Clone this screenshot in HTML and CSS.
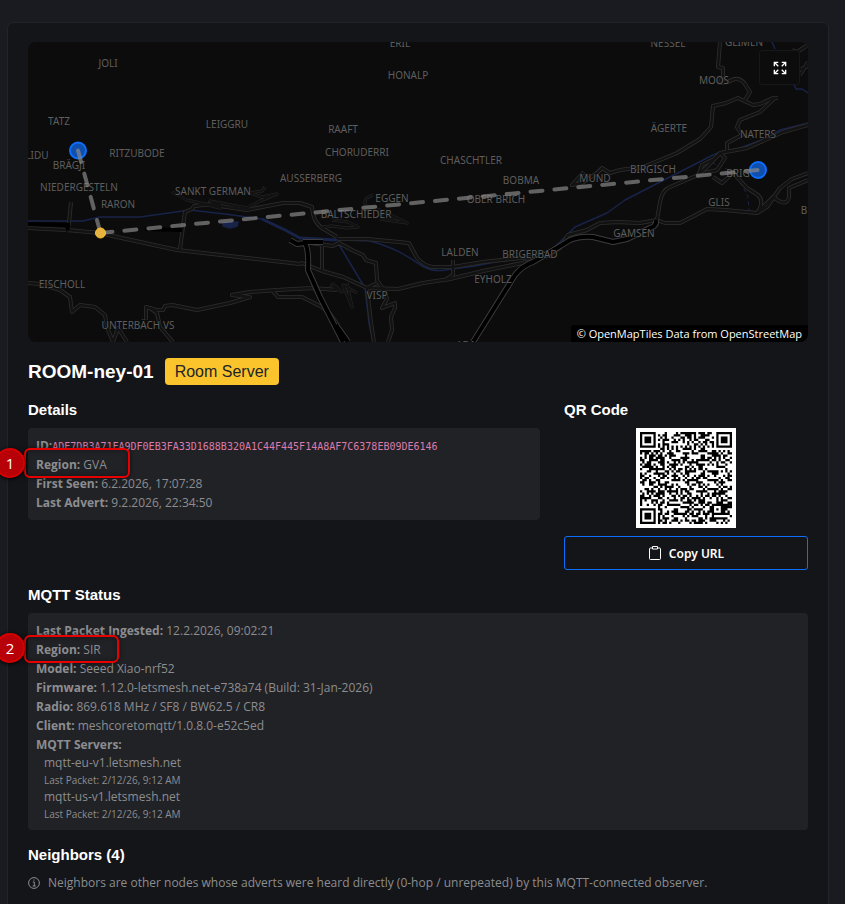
FILE: index.html
```html
<!doctype html>
<html lang="en">
  <head>
    <meta charset="utf-8">
    <meta name="viewport" content="width=device-width, initial-scale=1">
    <title>ROOM-ney-01</title>
    <link rel="stylesheet" href="styles.css">
  </head>
  <body>
    <main class="card">
      <div class="map">
        <svg class="map-canvas" viewBox="28 42 780 300" preserveAspectRatio="xMidYMid slice">
          <defs>
            <g id="roads">
              <path d="M28 228L67 230L100 233L117 237L177 250L300 264L302 263L322 271L343 277L367 288L398 289L423 283L450 279L483 271L537 260"/>
              <path d="M338 239L367 239L409 243L417 258Q424 266 433 267L453 267L483 262L530 257L547 254L557 247"/>
              <path d="M180 249L185 212L192 209L194 206L213 204L220 206L247 210L267 206L283 203L300 203L312 207Q313 222 322 228L337 237"/>
              <path d="M322 242L322 270"/>
              <path d="M303 242L333 246L339 243L352 250L363 255L366 260L376 263L377 280L385 292L387 299L382 308L395 303L395 308L391 317L392 330L388 342"/>
              <path d="M367 288L371 323L374 342M367 288L377 283"/>
              <path d="M28 283L40 284L60 290L70 297L72 312L80 305L95 307L105 315L107 327L113 342L118 328L127 342"/>
              <path d="M146 320L146 307L156 310L163 310L165 306L172 305L197 310L230 303L250 297L232 295L250 292L277 290L313 288L337 290"/>
              <path d="M150 308L157 313L160 327L173 342"/>
              <path d="M272 290L278 297L302 297L322 307L330 314L338 325"/>
              <path d="M453 260L453 275L445 280"/>
              <path d="M71 202L69 223L67 232"/>
              <path d="M720 42L718 67L723 68L723 75L720 83L728 82Q738 75 745 84L750 92L745 100"/>
              <path d="M778 98L773 98L760 104L753 105L738 98L726 103L713 106L711 127L700 139L677 153L643 167L620 170L610 173L602 168L597 173L582 183L572 185L584 172"/>
              <path d="M775 98L760 112L740 120L737 127L742 135L727 143L727 152"/>
              <path d="M808 125L783 132L747 148L720 153L707 167L698 175L670 187Q662 190 660 202L657 220"/>
              <path d="M699 174L702 165L714 159L721 153M705 173L717 170L725 158L721 154"/>
              <path d="M713 177L722 183L733 173L747 188L758 195Q765 202 757 213"/>
              <path d="M545 257L560 248L568 235L587 230L600 223L617 222L640 223L657 220L665 223L680 223L690 218L707 209L725 210L757 213L767 207L780 188L792 179L808 173"/>
              <path d="M757 213L773 197Q787 208 789 197L789 188L808 180"/>
              <path d="M792 50L797 52L808 45M800 75L808 62M801 69L808 66"/>
            </g>
            <g id="lanes">
              <path d="M172 192L187 200L200 203L220 208L220 205L210 201L247 208L260 201L277 194L262 197L250 193L262 191L265 187"/>
              <path d="M323 227L332 226L347 228L358 227L348 222L332 220M373 195Q362 199 366 206L380 210"/>
              <path d="M380 219L407 223L387 213L377 215M330 285L342 292L332 283M347 283L352 307L343 285L357 293"/>
            </g>
            <g id="motorways">
              <path d="M473 342L515 275Q522 266 533 262L557 248L570 240Q580 236 593 237L613 242L627 239L650 228Q657 226 656 220"/>
              <path d="M290 240L297 244L305 243Q309 250 308 270L320 297L343 342M303 242L323 242M336 325L348 342"/>
            </g>
          </defs>

          <g class="water">
            <path d="M28 221L83 221L100 217L140 217L190 210L225 214L262 219L285 230L300 238L337 240L370 241C400 249 412 260 424 267Q434 272 445 270L475 266L500 261L540 257L551 250L560 242L575 227L607 213L625 200L660 182L713 155L720 152L740 148L767 138L780 130L808 123"/>
            <path class="river" d="M262 219L285 230L300 238L337 240"/>
            <path d="M338 243L350 263L365 288L369 323L373 342"/>
            <path d="M772 42L775 49M794 85L796 89L802 89L808 93"/>
            <path class="stream" d="M712 163L723 167L733 173L743 187L748 197L749 211"/>
            <path class="lake" d="M223 223L238 222L237 226L230 228L223 226Z"/>
          </g>

          <use href="#roads" class="road-casing"/>
          <use href="#lanes" class="lane-casing"/>
          <use href="#roads" class="road"/>
          <use href="#lanes" class="lane"/>
          <use href="#motorways" class="motorway-casing"/>
          <use href="#motorways" class="motorway"/>
          <path class="tunnel" d="M28 224L70 225M145 229L182 230M67 225L68 230"/>

          <g class="places">
            <text x="400" y="47">ERIL</text>
            <text x="668" y="47">NESSEL</text>
            <text x="744" y="46">GLIMEN</text>
            <text x="108" y="67">JOLI</text>
            <text x="408" y="79">HONALP</text>
            <text x="714" y="84">MOOS</text>
            <text x="59" y="125">TATZ</text>
            <text x="227" y="128">LEIGGRU</text>
            <text x="343" y="133">RAAFT</text>
            <text x="669" y="132">ÄGERTE</text>
            <text x="758" y="138">NATERS</text>
            <text x="37" y="159">LIDU</text>
            <text x="69" y="169">BRÄGJI</text>
            <text x="137" y="157">RITZUBODE</text>
            <text x="357" y="156">CHORUDERRI</text>
            <text x="471" y="164">CHASCHTLER</text>
            <text x="311" y="182">AUSSERBERG</text>
            <text x="521" y="184">BOBMA</text>
            <text x="595" y="182">MUND</text>
            <text x="653" y="173">BIRGISCH</text>
            <text x="738" y="177">BRIG</text>
            <text x="79" y="191">NIEDERGESTELN</text>
            <text x="213" y="195">SANKT GERMAN</text>
            <text x="118" y="208">RARON</text>
            <text x="392" y="202">EGGEN</text>
            <text x="496" y="203">OBER BRICH</text>
            <text x="719" y="206">GLIS</text>
            <text x="804" y="214">B</text>
            <text x="356" y="218">BALTSCHIEDER</text>
            <text x="634" y="237">GAMSEN</text>
            <text x="460" y="256">LALDEN</text>
            <text x="530" y="258">BRIGERBAD</text>
            <text x="493" y="283">EYHOLZ</text>
            <text x="62" y="288">EISCHOLL</text>
            <text x="377" y="299">VISP</text>
            <text x="138" y="329">UNTERBÄCH VS</text>
            <text x="466" y="349">ADA</text>
          </g>

          <circle class="node" cx="78" cy="150.5" r="8"/>
          <circle class="node" cx="758" cy="170" r="8"/>
          <path class="link" d="M78 150.5L100.5 233"/>
          <path class="link" d="M100.5 233L758 170"/>
          <circle class="room" cx="100.5" cy="233" r="5"/>
        </svg>

        <button class="fullscreen" type="button" aria-label="Fullscreen">
          <svg width="14" height="14" viewBox="0 0 16 16">
            <path d="M1.5 6V1.5H6M1.5 1.5L6 6M10 1.5H14.5V6M14.5 1.5L10 6M1.5 10V14.5H6M1.5 14.5L6 10M14.5 10V14.5H10M14.5 14.5L10 10"/>
          </svg>
        </button>
        <div class="attribution">© <a href="#">OpenMapTiles</a> <a href="#">Data from OpenStreetMap</a></div>
      </div>

      <header class="title">
        <h1>ROOM-ney-01</h1>
        <span class="badge">Room Server</span>
      </header>

      <div class="columns">
        <section class="details">
          <h2>Details</h2>
          <div class="panel">
            <p><b>ID:</b><code>ADE7DB3A71FA9DF0EB3FA33D1688B320A1C44F445F14A8AF7C6378EB09DE6146</code></p>
            <p class="marked">
              <b>Region:</b> GVA
              <span class="frame frame-gva"></span>
              <span class="step">1</span>
            </p>
            <p><b>First Seen:</b> 6.2.2026, 17:07:28</p>
            <p><b>Last Advert:</b> 9.2.2026, 22:34:50</p>
          </div>
        </section>

        <section class="share">
          <h2>QR Code</h2>
          <svg id="qr" class="qr" viewBox="0 0 41 41"></svg>
          <button class="copy" type="button">
            <svg width="14" height="14" viewBox="0 0 14 14">
              <path d="M4 2H2.500Q1.500 2 1.500 3V12.500Q1.500 13.500 2.500 13.500H11.500Q12.500 13.500 12.500 12.500V3Q12.500 2 11.500 2H10"/>
              <path d="M4.500 .5H9.500V3H4.500Z"/>
            </svg>
            Copy URL
          </button>
        </section>
      </div>

      <section>
        <h2>MQTT Status</h2>
        <div class="panel">
          <p><b>Last Packet Ingested:</b> 12.2.2026, 09:02:21</p>
          <p class="marked">
            <b>Region:</b> SIR
            <span class="frame frame-sir"></span>
            <span class="step">2</span>
          </p>
          <p><b>Model:</b> Seeed Xiao-nrf52</p>
          <p><b>Firmware:</b> 1.12.0-letsmesh.net-e738a74 (Build: 31-Jan-2026)</p>
          <p><b>Radio:</b> 869.618 MHz / SF8 / BW62.5 / CR8</p>
          <p><b>Client:</b> meshcoretomqtt/1.0.8.0-e52c5ed</p>
          <p><b>MQTT Servers:</b></p>
          <ul class="servers">
            <li>mqtt-eu-v1.letsmesh.net <small>Last Packet: 2/12/26, 9:12 AM</small></li>
            <li>mqtt-us-v1.letsmesh.net <small>Last Packet: 2/12/26, 9:12 AM</small></li>
          </ul>
        </div>
      </section>

      <section>
        <h2>Neighbors (4)</h2>
        <p class="hint">
          <svg width="12" height="12" viewBox="0 0 12 12">
            <circle cx="6" cy="6" r="5.400"/>
            <path d="M4.800 5H6.300V9M4.600 9H7.800M6 2.500V3.700"/>
          </svg>
          Neighbors are other nodes whose adverts were heard directly (0-hop / unrepeated) by this MQTT-connected observer.
        </p>
      </section>
    </main>
    <script src="qr.js"></script>
  </body>
</html>
```

FILE: styles.css
```css
* {
  box-sizing: border-box;
}
body {
  margin: 0;
  padding: 22px 16px 0 7px;
  background: #1a1b20;
  color: #8c8d90;
  font-family: "Open Sans", "Noto Sans", sans-serif;
  font-size: 12px;
  line-height: 19px;
}
h1, h2, p, ul {
  margin: 0;
  padding: 0;
}
h1, h2 {
  color: #fff;
  font-family: "Liberation Sans", Arial, sans-serif;
  font-weight: bold;
}
h1 {
  font-size: 19px;
  line-height: 27px;
}
h2 {
  margin-bottom: 9px;
  font-size: 15px;
  line-height: 18px;
}

.card {
  min-height: calc(100vh - 22px);
  padding: 19px 20px 12px;
  background: #141519;
  border: 1px solid #222328;
  border-bottom: 0;
  border-radius: 6px 6px 0 0;
}

/* map */
.map {
  position: relative;
  height: 300px;
  overflow: hidden;
  background: #0c0c0c;
  border-radius: 8px;
}
.map-canvas {
  display: block;
  width: 100%;
  height: 100%;
}
.map-canvas path,
.map-canvas use {
  fill: none;
  stroke-linejoin: round;
}
.water path {
  stroke: #18234a;
  stroke-width: 1.5;
}
.water .river {
  stroke-width: 3;
}
.water .stream {
  stroke-dasharray: 4 3;
  stroke-width: 1;
}
.water .lake {
  fill: #18234a;
}
.map-canvas defs path {
  stroke: inherit;
}
.road-casing {
  stroke: #2e2e2e;
  stroke-width: 4;
}
.road {
  stroke: #121212;
  stroke-width: 2.4;
}
.lane-casing {
  stroke: #2a2a2a;
  stroke-width: 3;
}
.lane {
  stroke: #111;
  stroke-width: 2;
}
.motorway-casing {
  stroke: #3c3c3c;
  stroke-width: 6;
}
.motorway {
  stroke: #000;
  stroke-width: 4;
}
.tunnel {
  stroke: #000;
  stroke-width: 4;
}
.places text {
  fill: #5e5e5e;
  font-family: "Noto Sans", sans-serif;
  font-size: 10px;
  text-anchor: middle;
  paint-order: stroke;
  stroke: #0c0c0c;
  stroke-width: 1;
}
.map-canvas .link {
  stroke: #888;
  stroke-width: 4;
  stroke-opacity: .7;
  stroke-linecap: round;
  stroke-dasharray: 12 12;
}
.node {
  fill: #0f4fae;
  stroke: #0d6efd;
  stroke-width: 2;
}
.room {
  fill: #e5b341;
  stroke: #fcc32c;
  stroke-width: 1;
}
.fullscreen {
  position: absolute;
  top: 8px;
  right: 8px;
  display: flex;
  align-items: center;
  justify-content: center;
  width: 41px;
  height: 35px;
  padding: 0;
  background: #0c0c0d;
  border: 1px solid #15181b;
  border-radius: 3px;
}
.fullscreen svg {
  fill: none;
  stroke: #fff;
  stroke-width: 1.5;
}
.attribution {
  position: absolute;
  right: 0;
  bottom: 0;
  padding: 0 6px;
  background: #000;
  border-radius: 3px 0 0 0;
  color: #fff;
  font-size: 11px;
  line-height: 17px;
}
.attribution a {
  color: inherit;
  text-decoration: none;
}

/* title */
.title {
  display: flex;
  align-items: center;
  gap: 11px;
  margin: 16px 0;
}
.badge {
  padding: 0 10px;
  background: #fbc42d;
  border-radius: 4px;
  color: #212529;
  font-family: "Liberation Sans", Arial, sans-serif;
  font-size: 16px;
  line-height: 27px;
}

/* details and QR code */
.columns {
  display: grid;
  grid-template-columns: repeat(3, 1fr);
  column-gap: 24px;
  margin-bottom: 16px;
}
.details {
  grid-column: span 2;
}
.panel {
  margin-bottom: 16px;
  padding: 8px;
  background: #212226;
  border-radius: 4px;
}
.panel code {
  color: #dc7bac;
  font-family: "DejaVu Sans Mono", monospace;
  font-size: 10px;
  line-height: 1;
}
.share {
  display: flex;
  flex-direction: column;
}
.qr {
  align-self: center;
  width: 100px;
  height: 100px;
  margin-bottom: 8px;
  padding: 4px;
  background: #fff;
}
.copy {
  display: flex;
  align-items: center;
  justify-content: center;
  gap: 7px;
  height: 34px;
  background: transparent;
  border: 1px solid #0d6efd;
  border-radius: 3px;
  color: #fff;
  font-family: "Noto Sans", sans-serif;
  font-size: 12px;
  font-weight: 600;
}
.copy svg {
  fill: none;
  stroke: #fff;
}

/* numbered callouts */
.marked {
  position: relative;
}
.frame {
  position: absolute;
  left: -12px;
  border: 2px solid #e60000;
  border-radius: 6px;
  box-shadow: 0 0 4px rgba(0, 0, 0, .6), inset 0 0 5px rgba(0, 0, 0, .4);
}
.frame-gva {
  top: -7px;
  width: 106px;
  height: 30px;
}
.frame-sir {
  top: -5px;
  width: 95px;
  height: 28px;
}
.step {
  position: absolute;
  top: -7px;
  left: -41px;
  width: 30px;
  height: 30px;
  background: #b80008;
  border: 2px solid #d60000;
  border-radius: 50%;
  box-shadow: 0 1px 4px #000;
  color: #fff;
  font-size: 15px;
  line-height: 26px;
  text-align: center;
}

.servers {
  padding-left: 8px;
  list-style: none;
}
.servers li {
  line-height: 18px;
}
.servers small {
  display: block;
  font-size: 10px;
  line-height: 16px;
}

.hint {
  display: flex;
  align-items: center;
  gap: 8px;
}
.hint svg {
  flex: none;
  fill: none;
  stroke: #8c8d90;
}
```

FILE: qr.js
```js
// Minimal QR encoder: byte mode, version 6, error correction level L.
const SIZE = 41;
const DATA_WORDS = 136;
const BLOCK_WORDS = 68;
const ECC_WORDS = 18;

function gfMul(a, b) {
  let r = 0;
  for (; b; b >>= 1) {
    if (b & 1) r ^= a;
    a = (a << 1) ^ (a & 0x80 ? 0x11d : 0);
  }
  return r;
}

function eccGenerator() {
  let gen = [1];
  let root = 1;
  for (let i = 0; i < ECC_WORDS; i++) {
    const next = gen.concat(0);
    gen.forEach((c, j) => { next[j + 1] ^= gfMul(c, root); });
    gen = next;
    root = gfMul(root, 2);
  }
  return gen.slice(1);
}

function eccFor(block) {
  const gen = eccGenerator();
  const rem = new Array(ECC_WORDS).fill(0);
  for (const b of block) {
    const f = b ^ rem.shift();
    rem.push(0);
    gen.forEach((c, i) => { rem[i] ^= gfMul(c, f); });
  }
  return rem;
}

function codewords(text) {
  const bits = [];
  const put = (v, n) => { while (n--) bits.push((v >> n) & 1); };
  put(4, 4);
  put(text.length, 8);
  for (const ch of text) put(ch.charCodeAt(0), 8);
  put(0, 4);
  const words = [];
  for (let i = 0; i < bits.length; i += 8) {
    words.push(parseInt(bits.slice(i, i + 8).join(''), 2));
  }
  for (let pad = 0xec; words.length < DATA_WORDS; pad ^= 0xec ^ 0x11) words.push(pad);

  const a = words.slice(0, BLOCK_WORDS);
  const b = words.slice(BLOCK_WORDS);
  const ea = eccFor(a);
  const eb = eccFor(b);
  const out = [];
  a.forEach((w, i) => out.push(w, b[i]));
  ea.forEach((w, i) => out.push(w, eb[i]));
  return out;
}

const MASKS = [
  (r, c) => (r + c) % 2,
  (r, c) => r % 2,
  (r, c) => c % 3,
  (r, c) => (r + c) % 3,
  (r, c) => ((r >> 1) + Math.floor(c / 3)) % 2,
  (r, c) => (r * c) % 2 + (r * c) % 3,
  (r, c) => ((r * c) % 2 + (r * c) % 3) % 2,
  (r, c) => ((r + c) % 2 + (r * c) % 3) % 2
];

function build(words, mask) {
  const m = Array.from({length: SIZE}, () => new Array(SIZE).fill(null));
  const square = (cr, cc, radius, light) => {
    for (let r = cr - radius; r <= cr + radius; r++) {
      for (let c = cc - radius; c <= cc + radius; c++) {
        if (r < 0 || c < 0 || r >= SIZE || c >= SIZE) continue;
        const d = Math.max(Math.abs(r - cr), Math.abs(c - cc));
        m[r][c] = light.includes(d) ? 0 : 1;
      }
    }
  };
  square(3, 3, 4, [2, 4]);
  square(3, SIZE - 4, 4, [2, 4]);
  square(SIZE - 4, 3, 4, [2, 4]);
  square(34, 34, 2, [1]);
  for (let i = 8; i < SIZE - 8; i++) m[6][i] = m[i][6] = (i + 1) % 2;

  // format information
  let rem = 8 | mask;
  for (let i = 0; i < 10; i++) rem = (rem << 1) ^ ((rem >> 9) * 0x537);
  const format = (((8 | mask) << 10) | rem) ^ 0x5412;
  for (let i = 0; i < 15; i++) {
    const bit = (format >> i) & 1;
    if (i < 6) m[i][8] = bit;
    else if (i < 8) m[i + 1][8] = bit;
    else if (i === 8) m[8][7] = bit;
    else m[8][14 - i] = bit;
    if (i < 8) m[8][SIZE - 1 - i] = bit;
    else m[SIZE - 15 + i][8] = bit;
  }
  m[SIZE - 8][8] = 1;

  let n = 0;
  let up = true;
  for (let right = SIZE - 1; right > 0; right -= 2) {
    if (right === 6) right = 5;
    for (let k = 0; k < SIZE; k++) {
      const r = up ? SIZE - 1 - k : k;
      for (const c of [right, right - 1]) {
        if (m[r][c] !== null) continue;
        const bit = n < words.length * 8 ? (words[n >> 3] >> (7 - n % 8)) & 1 : 0;
        m[r][c] = bit ^ (MASKS[mask](r, c) === 0 ? 1 : 0);
        n++;
      }
    }
    up = !up;
  }
  return m;
}

function penalty(m) {
  let score = 0;
  let dark = 0;
  const lines = m.map(row => row.join(''));
  m.forEach((_, c) => lines.push(m.map(row => row[c]).join('')));
  for (const line of lines) {
    for (const run of line.match(/0{5,}|1{5,}/g) || []) score += run.length - 2;
    for (let i = 0; i + 11 <= SIZE; i++) {
      const part = line.substr(i, 11);
      if (part === '10111010000' || part === '00001011101') score += 40;
    }
  }
  for (let r = 0; r < SIZE; r++) {
    for (let c = 0; c < SIZE; c++) {
      dark += m[r][c];
      if (r && c) {
        const sum = m[r][c] + m[r - 1][c] + m[r][c - 1] + m[r - 1][c - 1];
        if (sum % 4 === 0) score += 3;
      }
    }
  }
  return score + Math.floor(Math.abs(dark * 20 / (SIZE * SIZE) - 10)) * 10;
}

function drawQr(svg, text) {
  const words = codewords(text);
  const best = MASKS.map((_, i) => build(words, i))
    .reduce((a, b) => (penalty(b) < penalty(a) ? b : a));
  let d = '';
  best.forEach((row, r) => row.forEach((on, c) => {
    if (on) d += 'M' + c + ' ' + r + 'h1v1h-1z';
  }));
  const path = document.createElementNS('http://www.w3.org/2000/svg', 'path');
  path.setAttribute('d', d);
  svg.appendChild(path);
}

const key = document.querySelector('.panel code').textContent.toLowerCase();
drawQr(document.getElementById('qr'),
       'meshcore://contact/add?name=ROOM-ney-01&public_key=' + key + '&type=3');
```
